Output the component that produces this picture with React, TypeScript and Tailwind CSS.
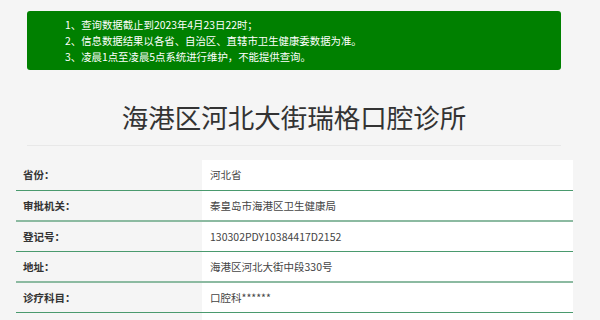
import React from "react";

const rows: { label: string; value: string; h: string }[] = [
  { label: "省份：", value: "河北省", h: "h-[31px]" },
  { label: "审批机关：", value: "秦皇岛市海港区卫生健康局", h: "h-[31px]" },
  { label: "登记号：", value: "130302PDY10384417D2152", h: "h-[30px]" },
  { label: "地址：", value: "海港区河北大街中段330号", h: "h-[31px]" },
  { label: "诊疗科目：", value: "口腔科******", h: "h-[30px]" },
];

export default function App() {
  return (
    <div
      className="w-[600px] h-[320px] overflow-hidden bg-[#f5f5f5]"
      style={{ fontFamily: '"Noto Sans CJK SC", "Noto Sans", sans-serif' }}
    >
      <div className="ml-[27px] w-[534px] pt-[11px]">
        <div className="h-[59px] rounded-[3px] bg-[#008000] pl-[38px] pt-[6px] text-[10.4px] leading-[16px] text-white">
          <div>1、查询数据截止到2023年4月23日22时；</div>
          <div>2、信息数据结果以各省、自治区、直辖市卫生健康委数据为准。</div>
          <div>3、凌晨1点至凌晨5点系统进行维护，不能提供查询。</div>
        </div>
        <div className="mt-[29px] border-b border-[#e8e8e8] pb-[10px] text-center text-[26.5px] leading-[36px] text-[#333]">
          海港区河北大街瑞格口腔诊所
        </div>
      </div>
      <div className="ml-[16px] mt-[14px] w-[557px]">
        {rows.map((r, i) => (
          <div
            key={i}
            className={
              "flex " +
              r.h +
              " " +
              (i % 2 === 0
                ? "border-b border-[#4a9a6e]"
                : "border-b-2 border-[#8cbaa1]")
            }
          >
            <div className="flex w-[186px] items-center pl-[7px] text-[10.5px] font-bold text-[#333]">
              {r.label}
            </div>
            <div className="flex flex-1 items-center bg-white pl-[8px] text-[10.5px] text-[#444]">
              {r.value}
            </div>
          </div>
        ))}
        <div className="flex h-[31px]">
          <div className="w-[186px]" />
          <div className="flex-1 bg-white" />
        </div>
      </div>
    </div>
  );
}
